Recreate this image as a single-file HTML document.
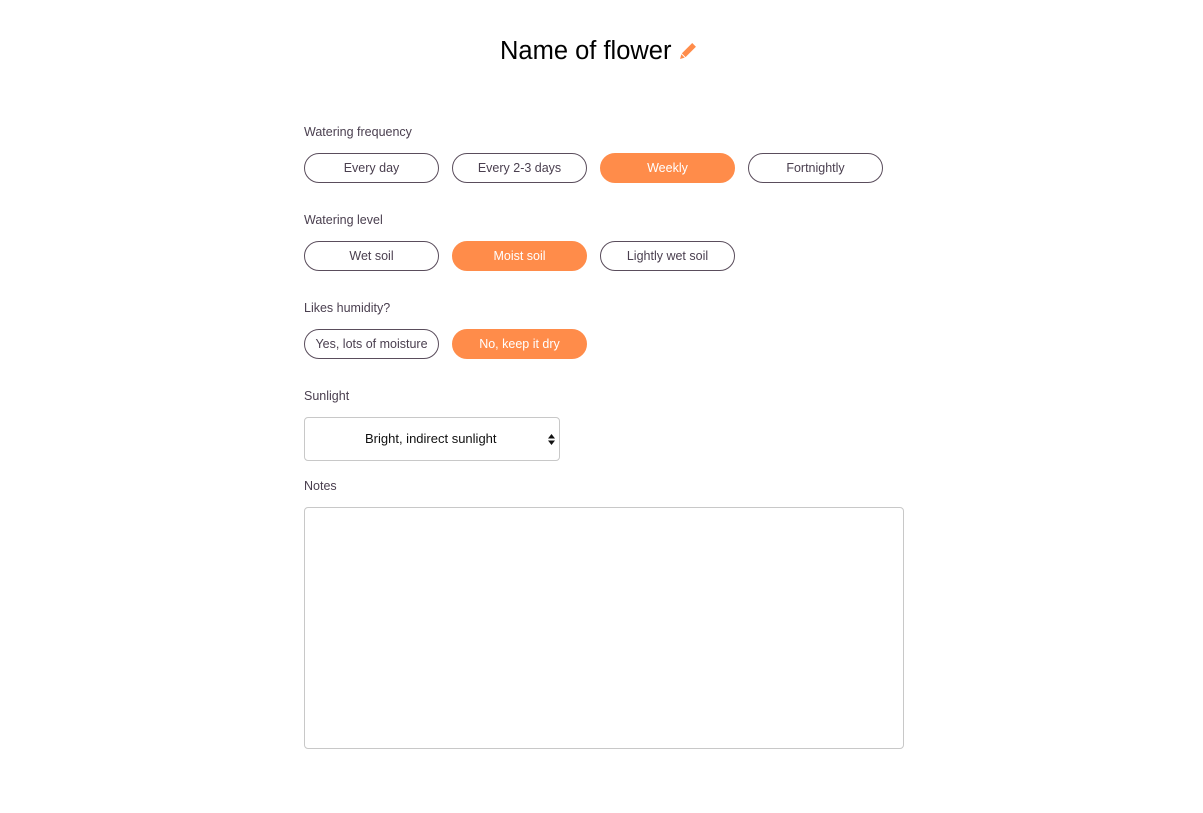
<!DOCTYPE html>
<html><head><style>
html,body{margin:0;padding:0;background:#fff;}
body{width:1203px;height:813px;position:relative;overflow:hidden;font-family:"Liberation Sans",sans-serif;}
.t{position:absolute;left:500px;top:35px;font-size:25.5px;color:#000;line-height:32px;white-space:nowrap}
.t svg{vertical-align:-1px;margin-left:8px}
.l{position:absolute;left:304px;font-size:12.5px;color:#4a3f4f;}
.b{position:absolute;width:133px;height:28px;border:1px solid #5a4d5c;border-radius:15px;font-size:12.5px;color:#4a3f4f;text-align:center;line-height:28px;background:#fff}
.b.on{background:#ff8c4a;border-color:#ff8c4a;color:#fff}
.sel{position:absolute;left:304px;top:417px;width:254px;height:42px;border:1px solid #c8c8c8;border-radius:4px;font-size:13px;color:#111;line-height:42px}
.sel span{position:absolute;left:60px}
.ta{position:absolute;left:304px;top:507px;width:598px;height:240px;border:1px solid #c8c8c8;border-radius:4px}
</style></head><body>
<div class="t">Name of flower<svg width="18" height="18" viewBox="0 0 17 17"><path d="M12.5 1l3.5 3.5L6.2 14.3 2.7 10.8z" fill="#ff8c4a"/><path d="M2.2 11.6l3.2 3.2L1 16z" fill="#ff8c4a"/></svg></div>
<div class="l" style="top:125px">Watering frequency</div>
<div class="b" style="left:304px;top:153px">Every day</div>
<div class="b" style="left:452px;top:153px">Every 2-3 days</div>
<div class="b on" style="left:600px;top:153px">Weekly</div>
<div class="b" style="left:748px;top:153px">Fortnightly</div>
<div class="l" style="top:213px">Watering level</div>
<div class="b" style="left:304px;top:241px">Wet soil</div>
<div class="b on" style="left:452px;top:241px">Moist soil</div>
<div class="b" style="left:600px;top:241px">Lightly wet soil</div>
<div class="l" style="top:301px">Likes humidity?</div>
<div class="b" style="left:304px;top:329px">Yes, lots of moisture</div>
<div class="b on" style="left:452px;top:329px">No, keep it dry</div>
<div class="l" style="top:389px">Sunlight</div>
<div class="sel"><span>Bright, indirect sunlight</span><svg style="position:absolute;right:4px;top:16px" width="7" height="11" viewBox="0 0 7 11"><path d="M3.5 0L7 4.5H0zM3.5 11L0 6.5h7z" fill="#111"/></svg></div>
<div class="l" style="top:479px">Notes</div>
<div class="ta"></div>
</body></html>
